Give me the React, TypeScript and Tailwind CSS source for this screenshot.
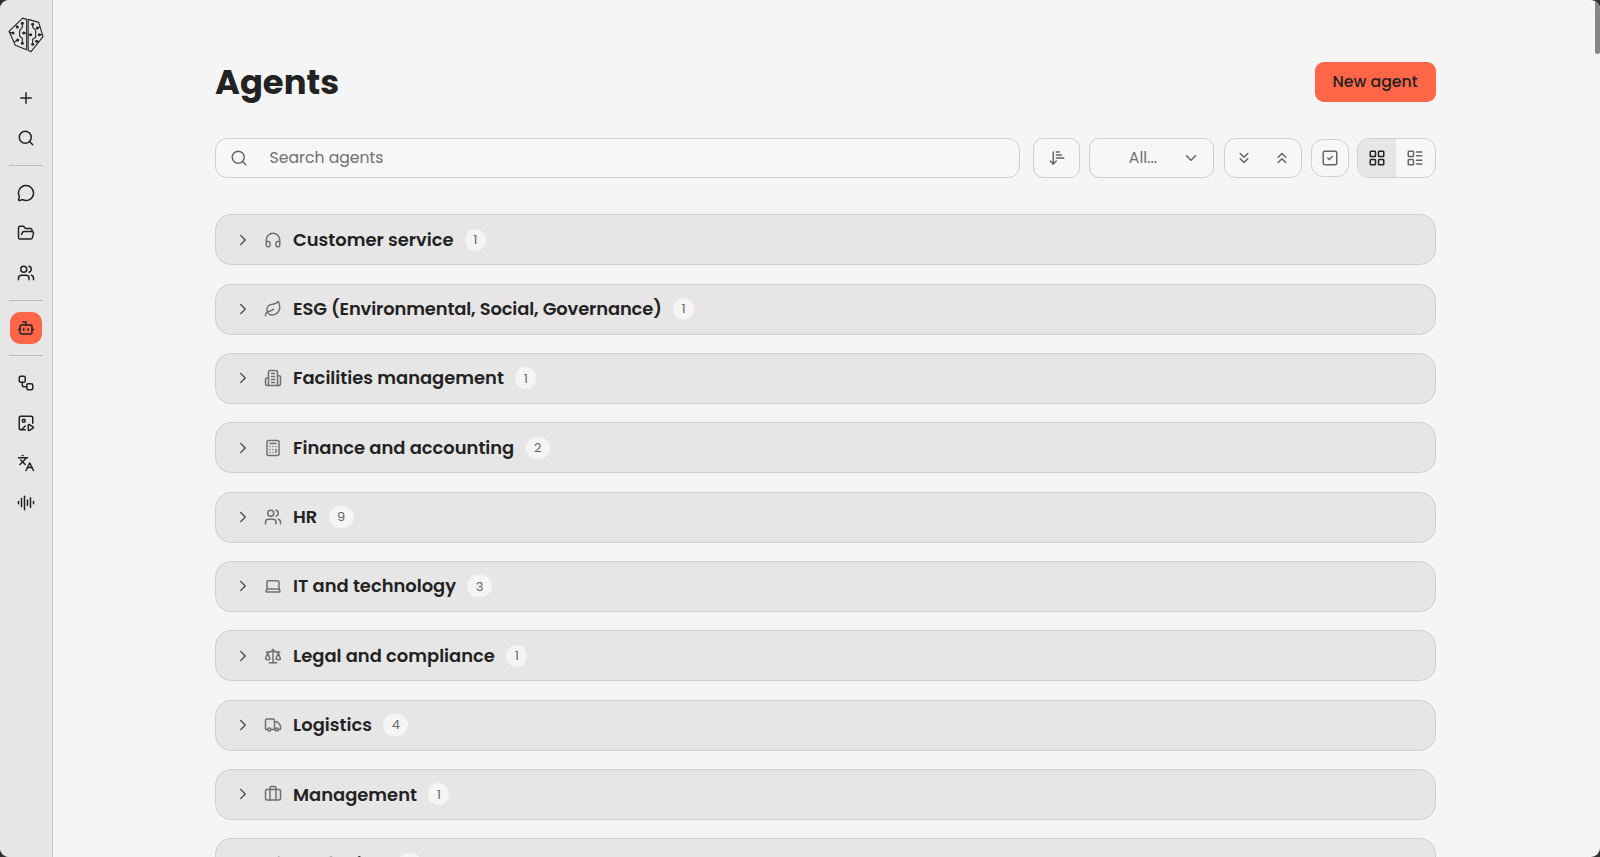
import type { ComponentType } from 'react';
import {
  ArrowDownNarrowWide,
  AudioLines,
  Bot,
  Briefcase,
  Calculator,
  ChevronDown,
  ChevronRight,
  ChevronsDown,
  ChevronsUp,
  FolderOpen,
  Headphones,
  ImagePlay,
  Languages,
  Laptop,
  LayoutGrid,
  LayoutList,
  Leaf,
  Megaphone,
  MessageCircle,
  Plus,
  Scale,
  Search,
  SquareCheck,
  Truck,
  Users,
  Workflow,
} from 'lucide-react';

type IconProps = { size?: number; strokeWidth?: number; className?: string };
type IconType = ComponentType<IconProps>;

const OfficeBuilding = ({ size = 18, strokeWidth = 2, className }: IconProps) => (
  <svg
    width={size}
    height={size}
    viewBox="0 0 24 24"
    fill="none"
    stroke="currentColor"
    strokeWidth={strokeWidth}
    strokeLinecap="round"
    strokeLinejoin="round"
    className={className}
  >
    <path d="M6 22V4a2 2 0 0 1 2-2h8a2 2 0 0 1 2 2v18Z" />
    <path d="M6 12H4a2 2 0 0 0-2 2v6a2 2 0 0 0 2 2h2" />
    <path d="M18 9h2a2 2 0 0 1 2 2v9a2 2 0 0 1-2 2h-2" />
    <path d="M10 6h4M10 10h4M10 14h4M10 18h4" />
  </svg>
);

const Logo = () => (
  <svg width="36" height="36" viewBox="24 51 108 108" fill="none" stroke="#262626" strokeWidth="3.4" strokeLinejoin="round">
    <path d="M27 94 68 54.500 80 58V149L46 136Z" />
    <path d="M84.500 58 116 67 129 110 93 155 84.500 151Z" />
    <path d="M67 70V82L59 91V108L67 115V130M71 99H80M39 99 30 97M52 81 46 76M53 120 43 126" />
    <path d="M98 73V82L107 90V112L98 118V133M92 104H85M118 104H127M112 84 121 80M110 124 117 127" />
    <g fill="#262626" stroke="none">
      {[
        [67, 70], [52, 81], [39, 99], [71, 99], [53, 120], [67, 130],
        [98, 73], [112, 84], [92, 104], [118, 104], [110, 124], [98, 133],
      ].map(([cx, cy]) => (
        <circle key={`${cx}-${cy}`} cx={cx} cy={cy} r="4.500" />
      ))}
    </g>
  </svg>
);

const navGroups: { label: string; icon: IconType; active?: boolean }[][] = [
  [
    { label: 'New chat', icon: Plus },
    { label: 'Search', icon: Search },
  ],
  [
    { label: 'Chats', icon: MessageCircle },
    { label: 'Folders', icon: FolderOpen },
    { label: 'Teams', icon: Users },
  ],
  [{ label: 'Agents', icon: Bot, active: true }],
  [
    { label: 'Workflows', icon: Workflow },
    { label: 'Media', icon: ImagePlay },
    { label: 'Translate', icon: Languages },
    { label: 'Audio', icon: AudioLines },
  ],
];

const categories: { name: string; count: number; icon: IconType; className?: string }[] = [
  { name: 'Customer service', count: 1, icon: Headphones },
  { name: 'ESG (Environmental, Social, Governance)', count: 1, icon: Leaf, className: 'bg-[#e7e5e6] tracking-[-0.12px]' },
  { name: 'Facilities management', count: 1, icon: OfficeBuilding },
  { name: 'Finance and accounting', count: 2, icon: Calculator },
  { name: 'HR', count: 9, icon: Users },
  { name: 'IT and technology', count: 3, icon: Laptop },
  { name: 'Legal and compliance', count: 1, icon: Scale },
  { name: 'Logistics', count: 4, icon: Truck },
  { name: 'Management', count: 1, icon: Briefcase },
  { name: 'Marketing', count: 3, icon: Megaphone },
];

const Sidebar = () => (
  <aside className="w-[53px] shrink-0 h-full bg-[#e6e6e6] border-r border-[#cbcbcb] flex flex-col items-center pt-[17px]">
    <Logo />
    <nav className="flex flex-col items-center mt-[25px]">
      {navGroups.map((group, i) => (
        <div key={i} className="flex flex-col items-center">
          {i > 0 && <div className="w-[34px] h-px bg-[#bdbdbd] my-[6.75px]" />}
          {group.map(({ label, icon: Icon, active }) => (
            <button key={label} aria-label={label} className="h-[40.2px] flex items-center justify-center text-[#222]">
              <span className={`size-[31.5px] rounded-[10px] flex items-center justify-center ${active ? 'bg-[#ff6647]' : ''}`}>
                <Icon size={18} strokeWidth={2} />
              </span>
            </button>
          ))}
        </div>
      ))}
    </nav>
  </aside>
);

const Toolbar = () => (
  <div className="flex items-center mt-9 h-10 text-[#666]">
    <div className="w-[804.5px] h-10 border border-[#cfcfcf] rounded-xl flex items-center pl-[13.5px] bg-[#f7f7f7]">
      <Search size={18} strokeWidth={1.9} />
      <input
        placeholder="Search agents"
        className="ml-[22px] flex-1 bg-transparent outline-none text-[15.7px] placeholder:text-[#707070]"
      />
    </div>
    <button aria-label="Sort" className="ml-[13.5px] w-[47px] h-10 border border-[#cfcfcf] rounded-[10px] flex items-center justify-center bg-[#f7f7f7]">
      <ArrowDownNarrowWide size={18} strokeWidth={2} />
    </button>
    <button className="ml-[9px] w-[125px] h-10 border border-[#cfcfcf] rounded-[10px] flex items-center justify-end pr-[13.5px] bg-[#f7f7f7]">
      <span className="text-[15.7px] text-[#707070] mr-[24.5px]">All...</span>
      <ChevronDown size={18} strokeWidth={2} />
    </button>
    <div className="ml-[9.5px] w-[78px] h-10 border border-[#cfcfcf] rounded-xl flex items-center bg-[#f7f7f7]">
      <button aria-label="Expand all" className="flex-1 flex justify-center">
        <ChevronsDown size={18} strokeWidth={2} />
      </button>
      <button aria-label="Collapse all" className="flex-1 flex justify-center">
        <ChevronsUp size={18} strokeWidth={2} />
      </button>
    </div>
    <button aria-label="Select" className="ml-[9px] size-[38px] border border-[#cfcfcf] rounded-xl flex items-center justify-center bg-[#f7f7f7]">
      <SquareCheck size={18} strokeWidth={2} />
    </button>
    <div className="ml-auto w-[78.5px] h-10 border border-[#cfcfcf] rounded-xl flex bg-[#f7f7f7] overflow-hidden">
      <button aria-label="Grid view" className="flex-1 flex items-center justify-center bg-[#e6e6e6] text-[#222]">
        <LayoutGrid size={18} strokeWidth={2} />
      </button>
      <button aria-label="List view" className="flex-1 flex items-center justify-center">
        <LayoutList size={18} strokeWidth={2} />
      </button>
    </div>
  </div>
);

const App = () => {
  return (
    <div className="h-screen bg-[#303030] overflow-hidden font-['Poppins','Inter',sans-serif] text-[#222]">
      <div className="relative h-full flex bg-[#f5f5f5] rounded-[9px] overflow-hidden">
        <Sidebar />
        <main className="flex-1 h-full overflow-hidden pl-[162px] pt-[62px]">
          <div className="w-[1220.5px]">
            <div className="flex items-center justify-between h-10">
              <h1 className="pt-0.5 text-[33.8px] leading-10 font-bold">Agents</h1>
              <button className="w-[121px] h-10 rounded-[9px] bg-[#ff6647] text-[15.7px] font-medium">
                New agent
              </button>
            </div>
            <Toolbar />
            <div className="flex flex-col gap-[18.35px] mt-[36.2px]">
              {categories.map(({ name, count, icon: Icon, className }) => (
                <div
                  key={name}
                  className={`h-[51px] shrink-0 border border-[#cfcfcf] rounded-2xl flex items-center pl-[18px] ${className ?? 'bg-[#e6e6e6]'}`}
                >
                  <ChevronRight size={18} strokeWidth={2} className="text-[#555]" />
                  <Icon size={18} strokeWidth={2} className="ml-[11.5px] text-[#707070]" />
                  <h2 className="ml-[11.5px] pt-px text-[17.9px] font-semibold whitespace-nowrap">{name}</h2>
                  <span className="ml-[11.3px] h-[22px] px-[8.5px] rounded-full bg-[#f5f5f5] text-[13px] text-[#666] flex items-center">
                    {count}
                  </span>
                </div>
              ))}
            </div>
          </div>
        </main>
        <div className="absolute right-0 top-0 w-[5px] h-[54px] rounded-b-sm bg-[#868686]" />
      </div>
    </div>
  );
};

export default App;
